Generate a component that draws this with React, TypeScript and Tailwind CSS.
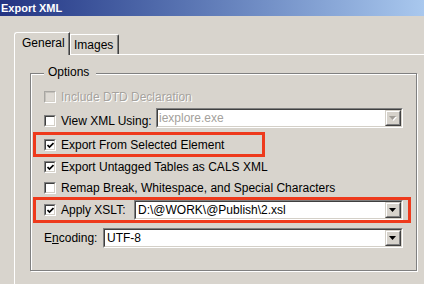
import React from 'react';

const Check = () => (
  <svg width="7" height="7" viewBox="0 0 7 7">
    <path d="M0.5 3 L2.5 5 L6.5 1" fill="none" stroke="#000" strokeWidth="1.7" />
  </svg>
);

const CheckBox: React.FC<{ checked?: boolean; disabled?: boolean }> = ({ checked = false, disabled = false }) => (
  <div
    className={`w-[12px] h-[12px] shrink-0 border ${
      disabled ? 'border-t-[#a8a6a2] border-l-[#a8a6a2]' : 'border-t-[#808080] border-l-[#808080]'
    } border-b-white border-r-white`}
  >
    <div
      className={`w-full h-full flex items-center justify-center border ${
        disabled
          ? 'border-t-[#c4c1bb] border-l-[#c4c1bb] bg-[#dedad4]'
          : 'border-t-[#404040] border-l-[#404040] bg-white'
      } border-b-[#d4d0c8] border-r-[#d4d0c8]`}
    >
      {checked && <Check />}
    </div>
  </div>
);

const DropButton: React.FC<{ disabled?: boolean }> = ({ disabled = false }) => (
  <div className="h-full w-[16px] shrink-0 border border-t-[#d4d0c8] border-l-[#d4d0c8] border-b-[#404040] border-r-[#404040] bg-[#d6d2cb]">
    <div className="h-full w-full flex items-center justify-center border border-t-white border-l-white border-b-[#808080] border-r-[#808080]">
      <svg width="8" height="5" viewBox="0 0 8 5">
        {disabled && <polygon points="1,1 8,1 4.5,5" fill="#fff" />}
        <polygon points="0,0 7,0 3.5,4" fill={disabled ? '#a09c96' : '#000'} />
      </svg>
    </div>
  </div>
);

const Combo: React.FC<{ value: string; disabled?: boolean; pad?: string }> = ({ value, disabled = false, pad = 'pl-[2px]' }) => (
  <div className="flex-1 h-[20px] border border-t-[#808080] border-l-[#808080] border-b-white border-r-white">
    <div className="h-full flex items-center bg-white border border-t-[#404040] border-l-[#404040] border-b-[#d4d0c8] border-r-[#d4d0c8]">
      <span className={`flex-1 ${pad} leading-[14px] whitespace-nowrap ${disabled ? 'text-[#a4a19c]' : 'text-black'}`}>{value}</span>
      <DropButton disabled={disabled} />
    </div>
  </div>
);

const Label: React.FC<{ children: React.ReactNode; className?: string; disabled?: boolean }> = ({ children, className = '', disabled = false }) => (
  <span
    className={`leading-[14px] whitespace-nowrap ${
      disabled ? 'text-[#a6a39e] [text-shadow:1px_1px_0_#fff]' : 'text-black'
    } ${className}`}
  >
    {children}
  </span>
);

const Highlight: React.FC<{ className: string }> = ({ className }) => (
  <div className={`absolute border-[3px] border-[#ee3a1c] pointer-events-none ${className}`} />
);

export default function App() {
  return (
    <div className="w-[424px] h-[284px] overflow-hidden bg-[#d8d4cd] font-['Liberation_Sans',Arial,sans-serif] text-[12px] text-black">
      {/* title bar */}
      <div className="h-[16px] pl-[1px] flex items-center bg-gradient-to-r from-[#243483] to-[#a9c8ee] text-white font-bold text-[11px] leading-none">
        Export XML
      </div>

      <div className="pl-[14px] pt-[16px]">
        {/* tabs */}
        <div className="flex items-end h-[22px]">
          <div className="relative z-10 h-[23px] w-[56px] -mb-px bg-[#d8d4cd] border-t border-l border-white border-r border-r-[#404040] shadow-[inset_-1px_0_0_#808080] rounded-tl-[3px] pt-[3px] pl-[7px] leading-[14px]">
            General
          </div>
          <div className="h-[20px] w-[49px] border-t border-l border-white border-r border-r-[#404040] shadow-[inset_-1px_0_0_#808080] rounded-tr-[2px] pt-[3px] pl-[3px] leading-[14px]">
            Images
          </div>
        </div>

        {/* tab panel */}
        <div className="w-[420px] h-[240px] border-t border-l border-white pt-[18px] pl-[15px]">
          <div className="relative w-[387px] border border-[#808080] shadow-[inset_1px_1px_0_#fff,1px_1px_0_#fff] px-[13px] pb-[22px]">
            <span className="absolute left-[13px] -top-[9px] pl-[4px] pr-[7px] bg-[#d8d4cd] leading-[14px]">Options</span>

            <div className="mt-[13px] h-[20px] flex items-center gap-[5px]">
              <CheckBox disabled />
              <Label disabled>Include DTD Declaration</Label>
            </div>

            <div className="mt-[1px] h-[20px] flex items-center">
              <div className="mt-[6px] w-[112px] flex items-center gap-[5px]">
                <CheckBox />
                <Label>View XML Using:</Label>
              </div>
              <Combo value="iexplore.exe" disabled pad="pl-[1px]" />
            </div>

            <div className="relative mt-[7px] h-[20px] flex items-center gap-[5px]">
              <CheckBox checked />
              <Label>Export From Selected Element</Label>
              <Highlight className="-left-[11px] -top-[3px] w-[232px] h-[25px]" />
            </div>

            <div className="mt-[2px] h-[20px] flex items-center gap-[5px]">
              <CheckBox checked />
              <Label>Export Untagged Tables as CALS XML</Label>
            </div>

            <div className="mt-[1px] h-[20px] flex items-center gap-[5px]">
              <CheckBox />
              <Label>Remap Break, Whitespace, and Special Characters</Label>
            </div>

            <div className="relative mt-[2px] h-[20px] flex items-center">
              <div className="w-[90px] flex items-center gap-[5px]">
                <CheckBox checked />
                <Label>Apply XSLT:</Label>
              </div>
              <Combo value={'D:\\@WORK\\@Publish\\2.xsl'} />
              <Highlight className="-left-[11px] -top-[3px] w-[378px] h-[26px]" />
            </div>

            <div className="mt-[8px] h-[20px] flex items-center">
              <Label className="w-[59px]">
                E<span className="underline">n</span>coding:
              </Label>
              <Combo value="UTF-8" />
            </div>
          </div>
        </div>
      </div>
    </div>
  );
}
